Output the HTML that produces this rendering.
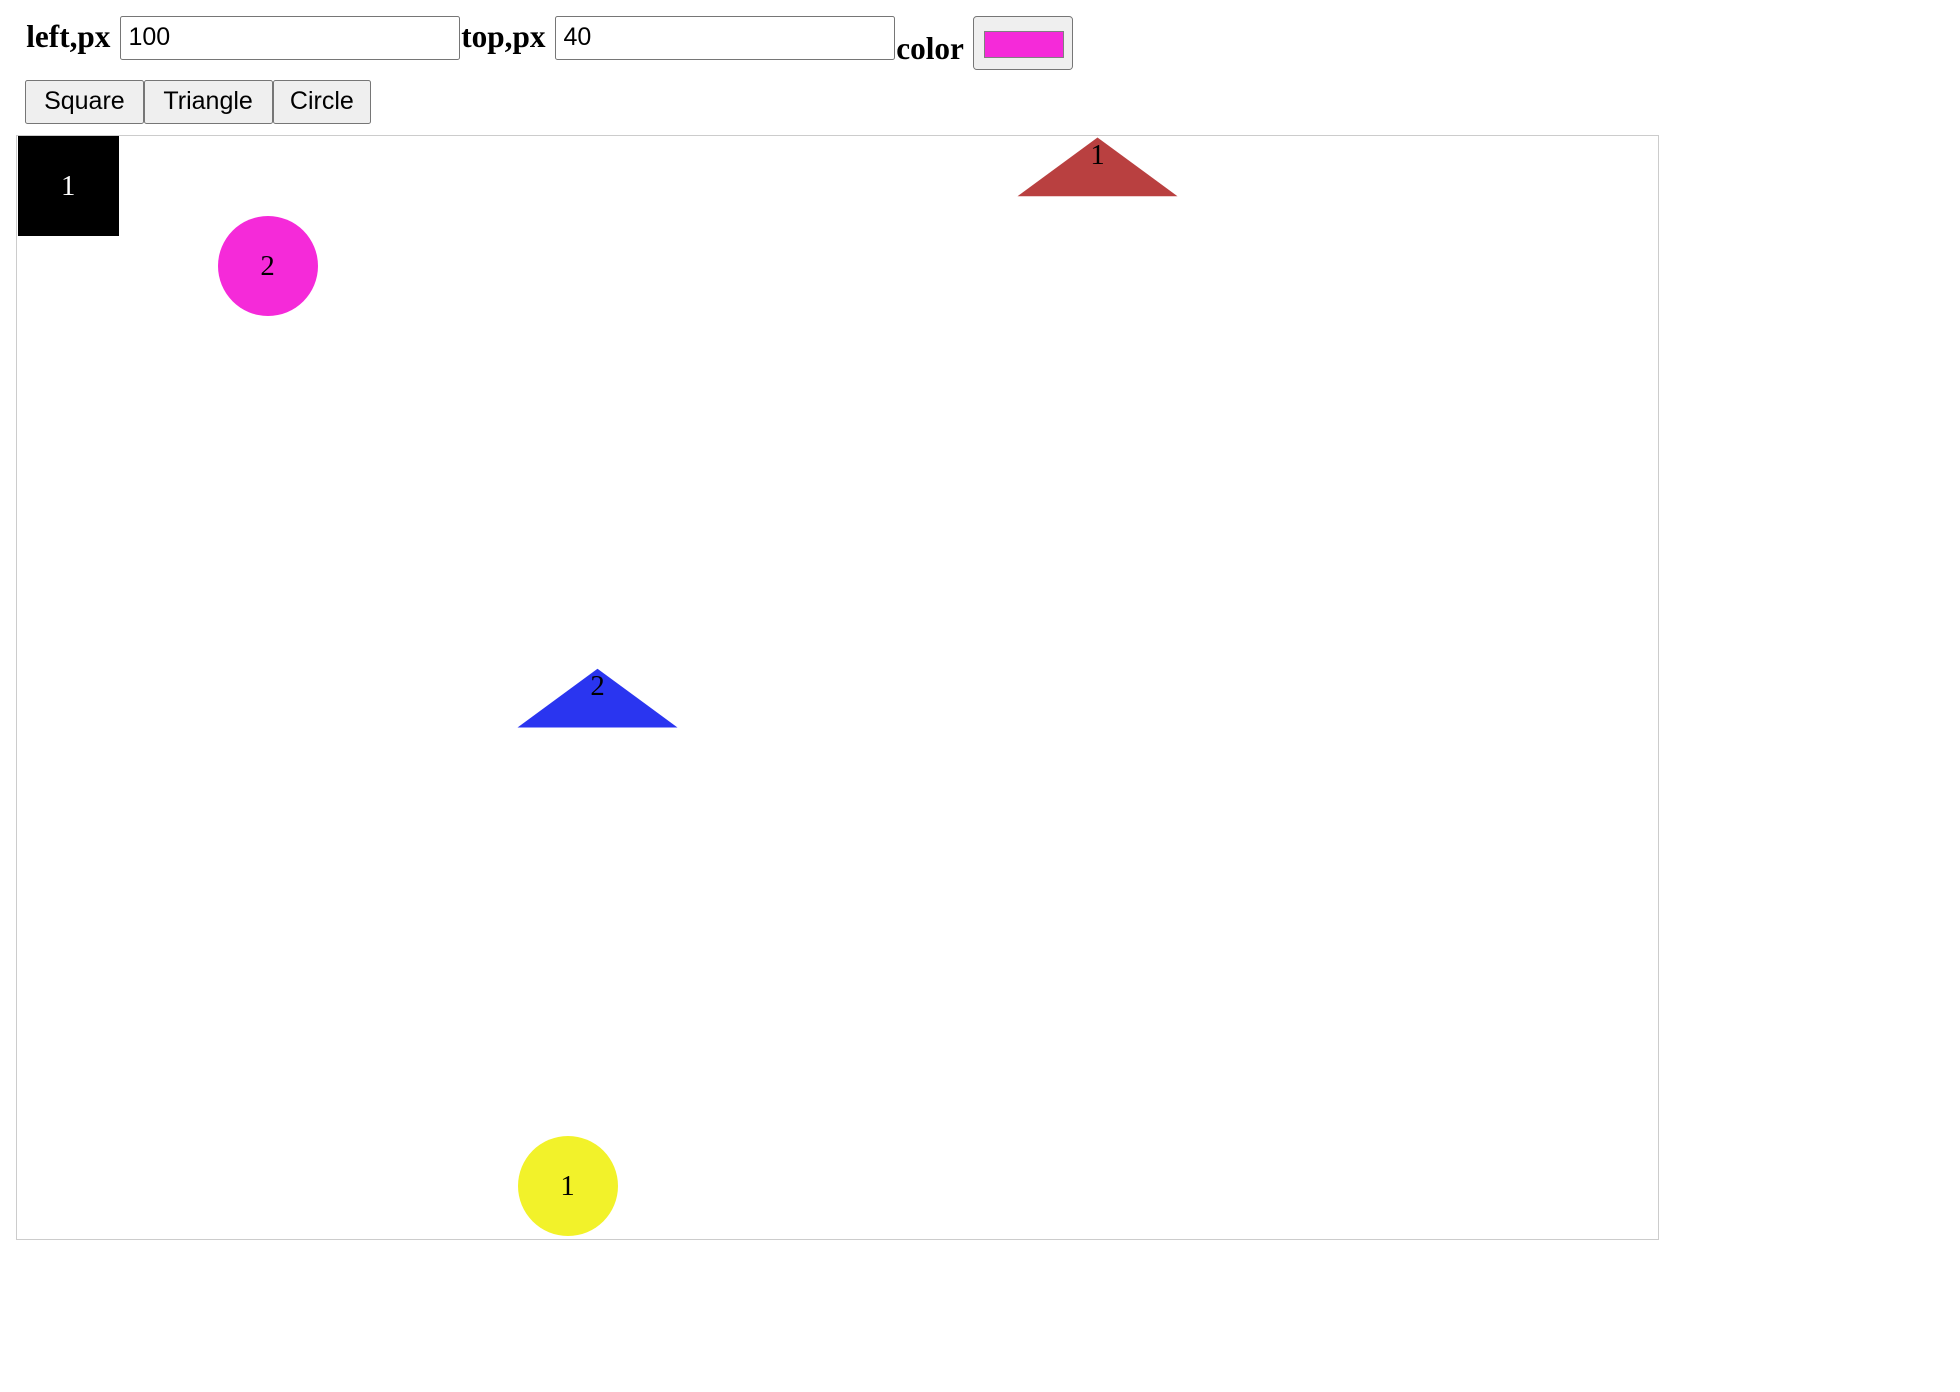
<!DOCTYPE html>
<html><head><style>
html,body{margin:0;padding:0;background:#fff;width:1960px;height:1392px;overflow:hidden}
#w{zoom:1.25;position:relative;width:1568px;height:1114px}
.a{position:absolute}
.lbl{font-family:"Liberation Serif",serif;font-weight:bold;font-size:25px;color:#000}
.inp{border:1px solid #767676;border-radius:2px;box-sizing:border-box;background:#fff;font-family:"Liberation Sans",sans-serif;font-size:20px;padding-left:6px;line-height:32px}
.btn{border:1px solid #767676;border-radius:2px;box-sizing:border-box;background:#efefef;font-family:"Liberation Sans",sans-serif;font-size:20px;text-align:center;line-height:33px;height:35px;top:64px}
.num{font-family:"Liberation Serif",serif;font-size:23px;text-align:center}
</style></head><body><div id="w">
<div class="a lbl" style="left:21px;top:15px">left,px</div>
<div class="a inp" style="left:96px;top:13px;width:272px;height:35px">100</div>
<div class="a lbl" style="left:369px;top:15px">top,px</div>
<div class="a inp" style="left:444px;top:13px;width:272px;height:35px">40</div>
<div class="a lbl" style="left:717px;top:25px">color</div>
<div class="a" style="left:778px;top:13px;width:80px;height:43px;box-sizing:border-box;border:1px solid #767676;border-radius:3px;background:#efefef"></div>
<div class="a" style="left:787px;top:25px;width:64px;height:21px;box-sizing:border-box;border:1px solid #808080;background:#f52ad9"></div>
<div class="a btn" style="left:20px;width:95px">Square</div>
<div class="a btn" style="left:115px;width:103px">Triangle</div>
<div class="a btn" style="left:218px;width:79px">Circle</div>
<div class="a" style="left:13px;top:108px;width:1314px;height:884px;box-sizing:border-box;border:1px solid #ccc"></div>
<div class="a num" style="left:14px;top:109px;width:81px;height:80px;background:#000;color:#fff;line-height:80px">1</div>
<div class="a num" style="left:174px;top:173px;width:80px;height:80px;border-radius:50%;background:#f52ad9;line-height:80px">2</div>
<div class="a num" style="left:414px;top:909px;width:80px;height:80px;border-radius:50%;background:#f2f22a;line-height:80px">1</div>
<svg class="a" style="left:0;top:0" width="1560" height="1108">
<polygon points="878,110 814,157 942,157" fill="#b94040"/>
<polygon points="478,535 414,582 542,582" fill="#2a35f0"/>
</svg>
<div class="a num" style="left:848px;top:110px;width:60px;line-height:28px">1</div>
<div class="a num" style="left:448px;top:535px;width:60px;line-height:28px">2</div>
</div></body></html>
